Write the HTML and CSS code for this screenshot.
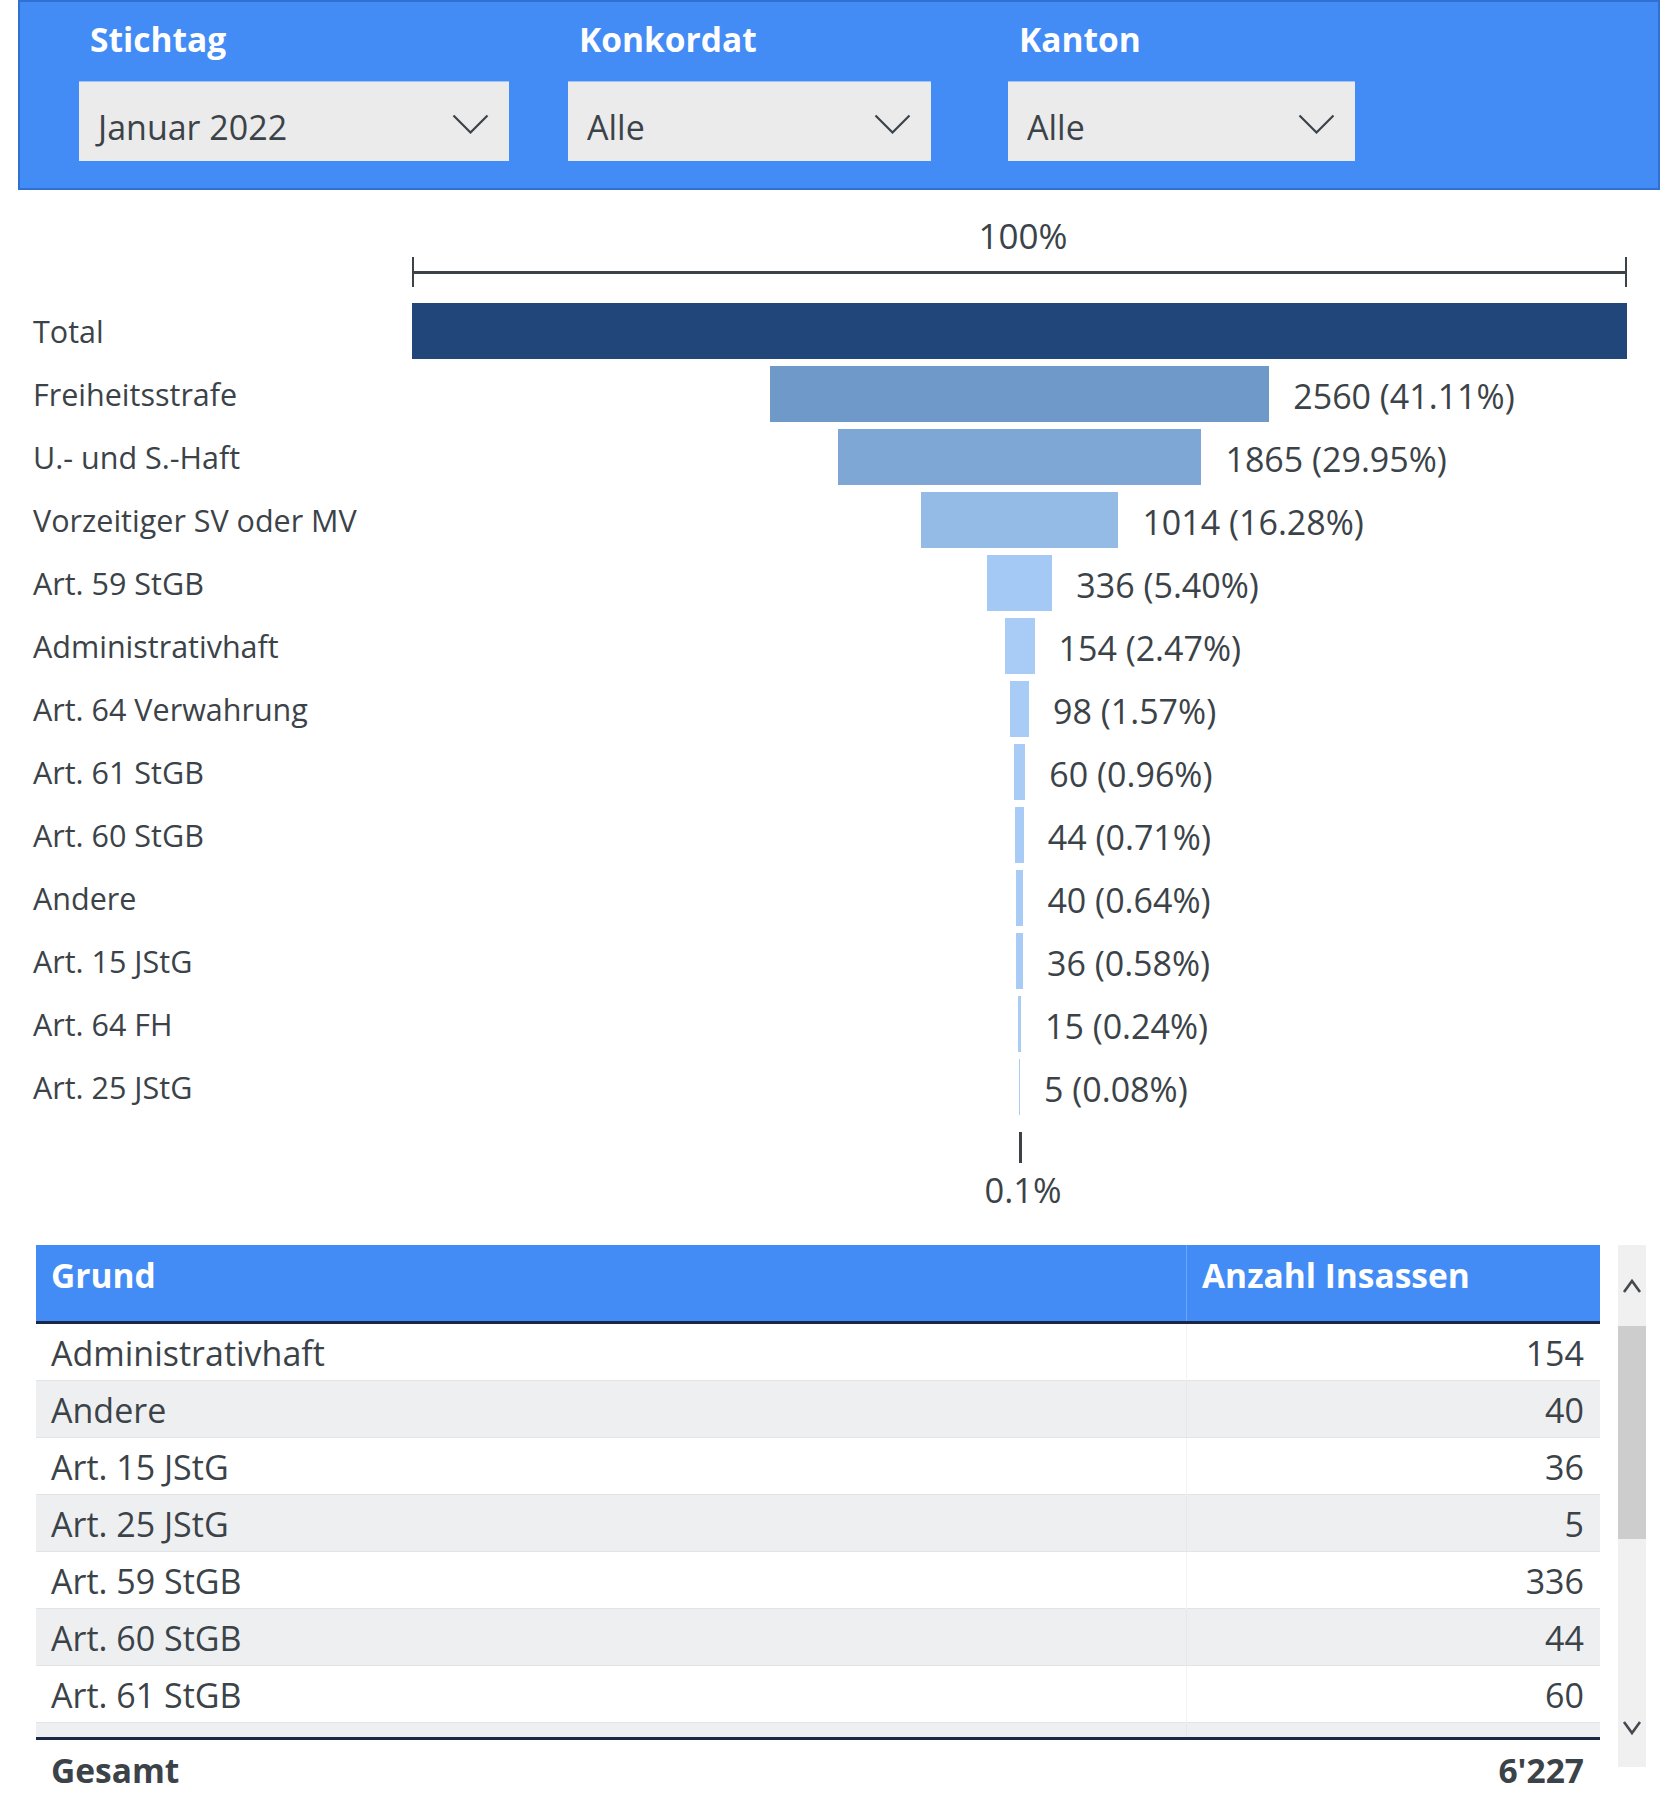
FILE: index.html
```html
<!DOCTYPE html>
<html lang="de">
<head>
<meta charset="utf-8">
<title>Insassen nach Grund</title>
<link rel="stylesheet" href="styles.css">
</head>
<body>
<div class="page">
  <section class="filters">
    <div class="filter f-stichtag">
      <div class="filter-label">Stichtag</div>
      <div class="dropdown"><span class="dd-text">Januar 2022</span><svg class="chev" viewBox="0 0 37 20"><path d="M1.5 1.5 L18.5 18.5 L35.5 1.5"/></svg></div>
    </div>
    <div class="filter f-konkordat">
      <div class="filter-label">Konkordat</div>
      <div class="dropdown"><span class="dd-text">Alle</span><svg class="chev" viewBox="0 0 37 20"><path d="M1.5 1.5 L18.5 18.5 L35.5 1.5"/></svg></div>
    </div>
    <div class="filter f-kanton">
      <div class="filter-label">Kanton</div>
      <div class="dropdown"><span class="dd-text">Alle</span><svg class="chev" viewBox="0 0 37 20"><path d="M1.5 1.5 L18.5 18.5 L35.5 1.5"/></svg></div>
    </div>
  </section>

  <section class="funnel">
    <div class="axis-head">
      <div class="spacer"></div>
      <div class="axis-top">
        <div class="axis-label">100%</div>
        <div class="axis-line"><span class="tick"></span><span class="line"></span><span class="tick"></span></div>
      </div>
    </div>

    <div class="rows">
      <div class="row"><div class="row-label">Total</div><div class="track"><span></span><span class="bar c0" style="width:1215px"></span><span class="value"></span></div></div>
      <div class="row"><div class="row-label">Freiheitsstrafe</div><div class="track"><span></span><span class="bar c1" style="width:499.5px"></span><span class="value">2560 (41.11%)</span></div></div>
      <div class="row"><div class="row-label">U.- und S.-Haft</div><div class="track"><span></span><span class="bar c2" style="width:363.9px"></span><span class="value">1865 (29.95%)</span></div></div>
      <div class="row"><div class="row-label">Vorzeitiger SV oder MV</div><div class="track"><span></span><span class="bar c3" style="width:197.8px"></span><span class="value">1014 (16.28%)</span></div></div>
      <div class="row"><div class="row-label">Art. 59 StGB</div><div class="track"><span></span><span class="bar c4" style="width:65.6px"></span><span class="value">336 (5.40%)</span></div></div>
      <div class="row"><div class="row-label">Administrativhaft</div><div class="track"><span></span><span class="bar c5" style="width:30px"></span><span class="value">154 (2.47%)</span></div></div>
      <div class="row"><div class="row-label">Art. 64 Verwahrung</div><div class="track"><span></span><span class="bar c5" style="width:19.1px"></span><span class="value">98 (1.57%)</span></div></div>
      <div class="row"><div class="row-label">Art. 61 StGB</div><div class="track"><span></span><span class="bar c5" style="width:11.7px"></span><span class="value">60 (0.96%)</span></div></div>
      <div class="row"><div class="row-label">Art. 60 StGB</div><div class="track"><span></span><span class="bar c5" style="width:8.6px"></span><span class="value">44 (0.71%)</span></div></div>
      <div class="row"><div class="row-label">Andere</div><div class="track"><span></span><span class="bar c5" style="width:7.8px"></span><span class="value">40 (0.64%)</span></div></div>
      <div class="row"><div class="row-label">Art. 15 JStG</div><div class="track"><span></span><span class="bar c5" style="width:7px"></span><span class="value">36 (0.58%)</span></div></div>
      <div class="row"><div class="row-label">Art. 64 FH</div><div class="track"><span></span><span class="bar c5" style="width:2.9px"></span><span class="value">15 (0.24%)</span></div></div>
      <div class="row"><div class="row-label">Art. 25 JStG</div><div class="track"><span></span><span class="bar c5" style="width:1px"></span><span class="value">5 (0.08%)</span></div></div>
    </div>

    <div class="axis-foot">
      <div class="spacer"></div>
      <div class="axis-bottom">
        <span class="tick-small"></span>
        <div class="axis-label">0.1%</div>
      </div>
    </div>
  </section>

  <section class="table-wrap">
    <div class="table">
      <div class="thead">
        <div class="th">Grund</div>
        <div class="th th-num">Anzahl Insassen</div>
      </div>
      <div class="tbody">
        <div class="tr"><div class="td">Administrativhaft</div><div class="td num">154</div></div>
        <div class="tr alt"><div class="td">Andere</div><div class="td num">40</div></div>
        <div class="tr"><div class="td">Art. 15 JStG</div><div class="td num">36</div></div>
        <div class="tr alt"><div class="td">Art. 25 JStG</div><div class="td num">5</div></div>
        <div class="tr"><div class="td">Art. 59 StGB</div><div class="td num">336</div></div>
        <div class="tr alt"><div class="td">Art. 60 StGB</div><div class="td num">44</div></div>
        <div class="tr"><div class="td">Art. 61 StGB</div><div class="td num">60</div></div>
        <div class="tr alt partial"><div class="td"></div><div class="td num"></div></div>
      </div>
      <div class="tfoot">
        <div class="tf">Gesamt</div>
        <div class="tf num">6'227</div>
      </div>
    </div>
    <div class="scrollbar">
      <div class="sb-btn sb-up"><svg viewBox="0 0 20 16"><path d="M2 14 L10 3 L18 14"/></svg></div>
      <div class="sb-thumb"></div>
      <div class="sb-rest"></div>
      <div class="sb-btn sb-down"><svg viewBox="0 0 20 16"><path d="M2 2 L10 13 L18 2"/></svg></div>
    </div>
  </section>
</div>
</body>
</html>
```

FILE: styles.css
```css
* { box-sizing: border-box; }

html, body {
  margin: 0;
  padding: 0;
  background: #ffffff;
}

body {
  font-family: "Open Sans", "Noto Sans", "DejaVu Sans", sans-serif;
  color: #3b4349;
  width: 1678px;
  height: 1806px;
  overflow: hidden;
}

.page {
  width: 1678px;
}

/* ---------- Filters ---------- */
.filters {
  margin-left: 18px;
  width: 1642px;
  height: 190px;
  background: #438cf5;
  border: 2px solid #3070d3;
  display: flex;
  align-items: flex-start;
  padding: 17px 0 0 59px;
}

.filter {
  display: flex;
  flex-direction: column;
}

.f-stichtag { width: 430px; }
.f-konkordat { width: 363px; margin-left: 59px; }
.f-kanton { width: 347px; margin-left: 77px; }

.filter-label {
  font-weight: 700;
  font-size: 33.5px;
  line-height: 40px;
  color: #ffffff;
  padding-left: 11px;
  height: 40px;
}

.dropdown {
  margin-top: 23px;
  height: 79px;
  background: #ebebeb;
  box-shadow: 0 -1px 0 #9ec2f6;
  display: flex;
  align-items: flex-start;
  padding-left: 19px;
  padding-right: 20px;
}

.dd-text {
  margin-top: 23px;
  font-size: 34px;
  line-height: 44px;
  color: #3b4349;
}

.chev {
  margin-left: auto;
  margin-top: 32px;
  width: 37px;
  height: 20px;
  fill: none;
  stroke: #3b4349;
  stroke-width: 2.2;
}

/* ---------- Funnel chart ---------- */
.funnel {
  padding-left: 33px;
}

.axis-head, .axis-foot {
  display: flex;
}

.spacer {
  width: 379px;
  flex: none;
}

.axis-top {
  width: 1215px;
  margin-top: 26px;
}

.axis-label {
  font-size: 35px;
  line-height: 40px;
  text-align: center;
  height: 40px;
  padding-left: 7px;
}

.axis-line {
  margin-top: 1px;
  height: 30px;
  display: flex;
  align-items: center;
}

.axis-line .tick {
  width: 2px;
  height: 30px;
  background: #3b4349;
  flex: none;
}

.axis-line .line {
  flex: 1;
  height: 3px;
  background: #3b4349;
}

.rows {
  margin-top: 16px;
  display: flex;
  flex-direction: column;
  gap: 7px;
}

.row {
  display: flex;
  height: 56px;
  align-items: center;
}

.row-label {
  width: 379px;
  flex: none;
  font-size: 30.5px;
  line-height: 40px;
  white-space: nowrap;
}

.track {
  width: 1215px;
  height: 56px;
  display: grid;
  grid-template-columns: minmax(0, 1fr) auto minmax(0, 1fr);
  align-items: center;
}

.bar {
  display: block;
  height: 56px;
}

.c0 { background: #214679; }
.c1 { background: #6f99c8; }
.c2 { background: #7ea7d6; }
.c3 { background: #94bae6; }
.c4 { background: #a4c9f4; }
.c5 { background: #a8ccf6; }

.value {
  padding-left: 24px;
  padding-top: 4px;
  font-size: 34px;
  line-height: 40px;
  white-space: nowrap;
  overflow: visible;
}

.axis-bottom {
  width: 1215px;
  margin-top: 17px;
  display: flex;
  flex-direction: column;
  align-items: center;
}

.tick-small {
  display: block;
  width: 3px;
  height: 31px;
  background: #3b4349;
  margin-left: 1px;
}

.axis-bottom .axis-label {
  margin-top: 7px;
  font-size: 34.5px;
}

/* ---------- Table ---------- */
.table-wrap {
  margin-top: 35px;
  padding-left: 36px;
  display: flex;
  align-items: flex-start;
}

.table {
  width: 1564px;
}

.thead {
  display: grid;
  grid-template-columns: 1150px 414px;
  height: 79px;
  background: #438cf5;
  border-bottom: 3px solid #1b2744;
}

.th {
  color: #ffffff;
  font-weight: 700;
  font-size: 33.5px;
  line-height: 40px;
  padding: 10px 15px 0;
}

.th-num {
  border-left: 1px solid #6ea6f7;
}

.tr {
  display: grid;
  grid-template-columns: 1150px 414px;
  height: 57px;
  border-bottom: 1px solid #e3e4e5;
  background: #ffffff;
}

.tr.alt {
  background: #eeeff0;
}

.tr.partial {
  height: 14px;
  border-bottom: none;
}

.td {
  font-size: 34px;
  line-height: 56px;
  padding: 1px 15px 0;
  white-space: nowrap;
}

.td.num, .tf.num {
  text-align: right;
  padding-right: 16px;
  border-left: 1px solid #e6e7e8;
}

.tr:not(.alt) .td.num {
  border-left-color: #f2f3f3;
}

.tfoot {
  display: grid;
  grid-template-columns: 1150px 414px;
  border-top: 3px solid #1b2744;
  height: 70px;
}

.tf {
  font-weight: 700;
  font-size: 33.5px;
  line-height: 50px;
  padding: 5px 15px 0;
}

.tf.num {
  border-left: none;
}

.scrollbar {
  margin-left: 18px;
  width: 28px;
  height: 522px;
  background: #f0f0f0;
  display: flex;
  flex-direction: column;
}

.sb-btn {
  display: flex;
  align-items: center;
  justify-content: center;
  flex: none;
}

.sb-up { height: 81px; }
.sb-down { height: 78px; }

.sb-btn svg {
  width: 20px;
  height: 16px;
  fill: none;
  stroke: #444a50;
  stroke-width: 2.6;
}

.sb-thumb {
  height: 213px;
  background: #cdcdcd;
  flex: none;
}

.sb-rest {
  flex: 1;
}
```
